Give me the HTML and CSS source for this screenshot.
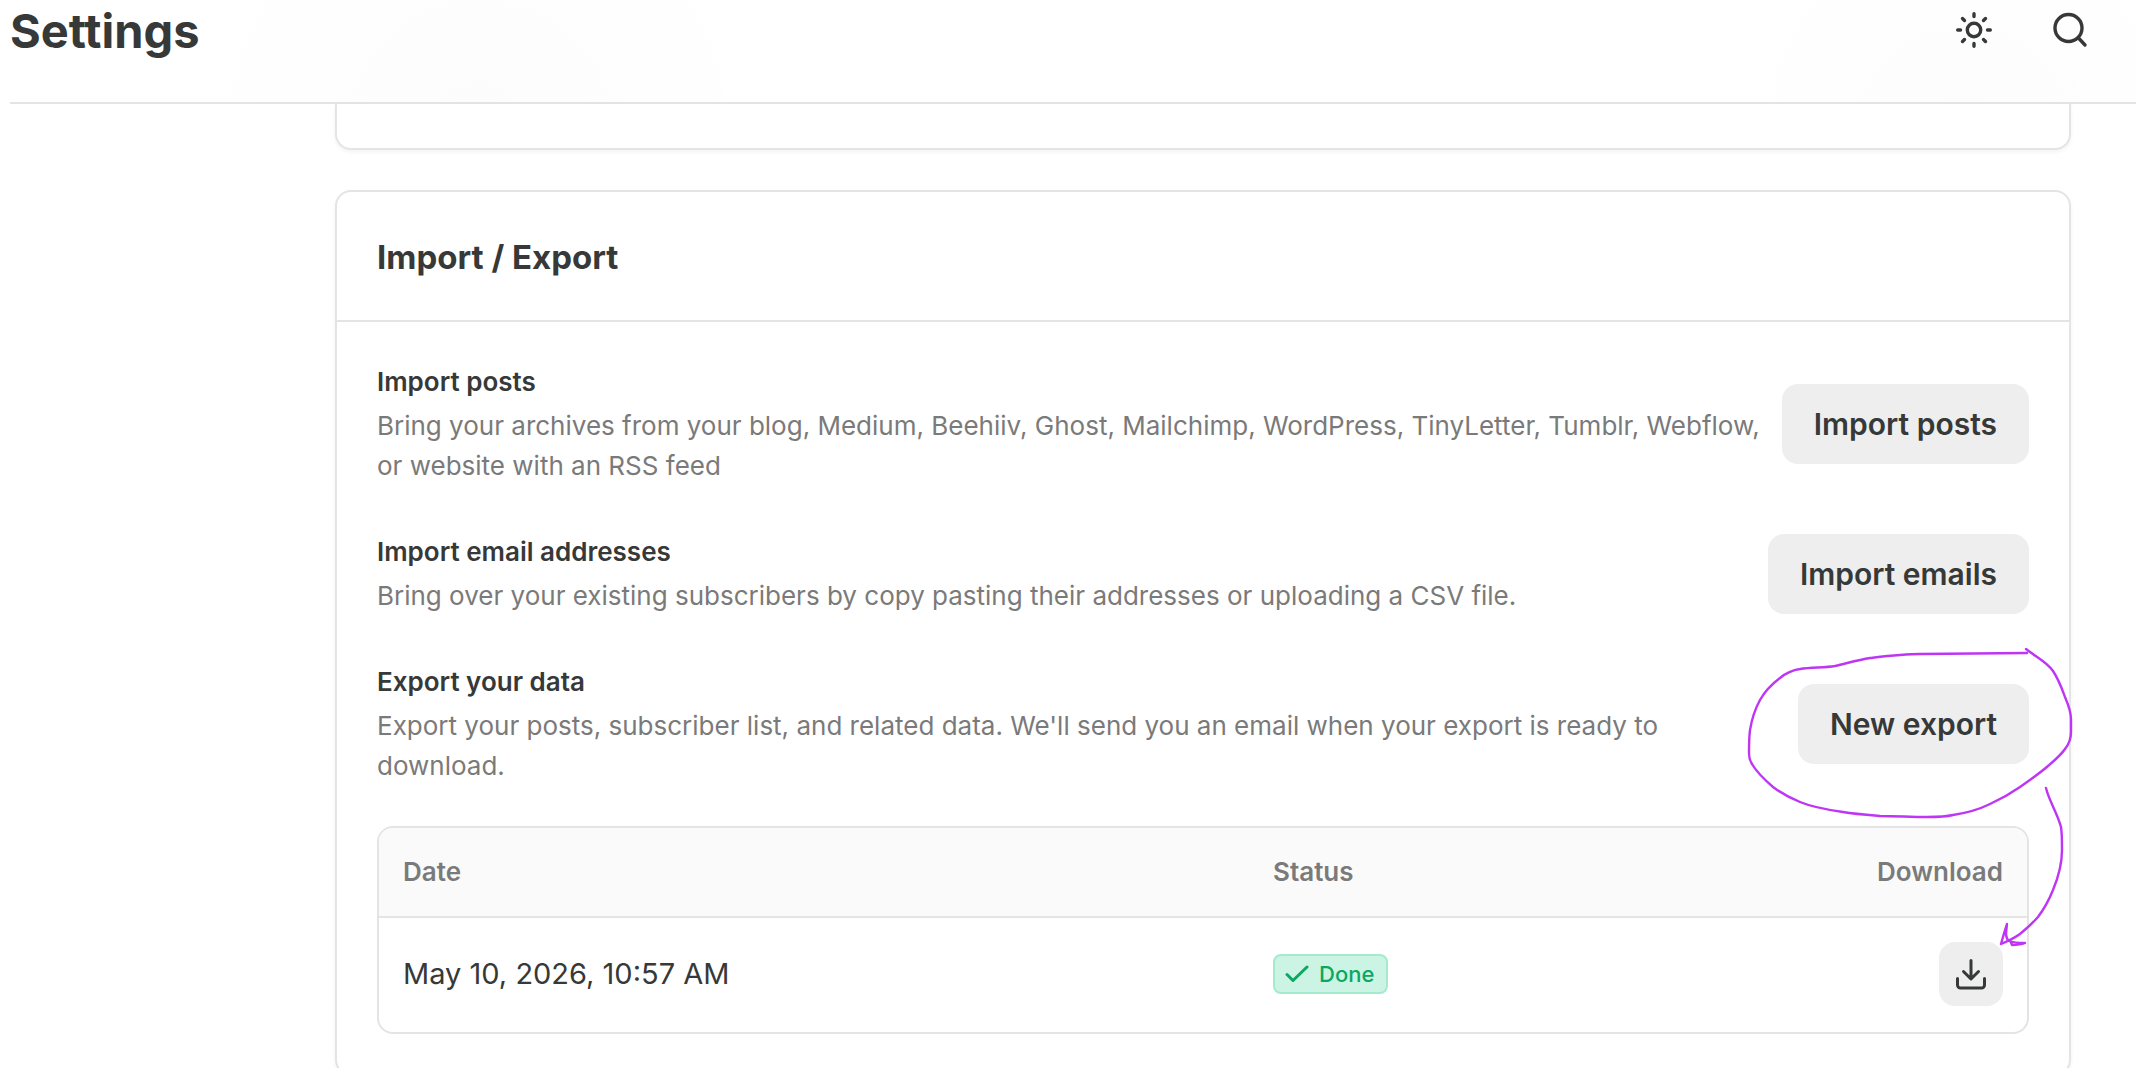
FILE: index.html
```html
<!DOCTYPE html>
<html lang="en">
<head>
<meta charset="utf-8">
<meta name="viewport" content="width=device-width, initial-scale=1">
<title>Settings</title>
<link rel="stylesheet" href="styles.css">
</head>
<body>
<div class="page">
  <header class="topbar">
    <h1 class="topbar-title">Settings</h1>
    <div class="topbar-actions">
      <button class="icon-button" type="button" aria-label="Toggle theme">
        <svg class="icon" viewBox="0 0 40 40" aria-hidden="true">
          <circle cx="20" cy="20" r="6.7"/>
          <path d="M20 3.7v2.8M20 33.5v2.8M3.7 20h2.800M33.5 20h2.8M8.5 8.5l2 2M29.5 29.5l2 2M8.5 31.5l2-2M29.5 10.5l2-2"/>
        </svg>
      </button>
      <button class="icon-button" type="button" aria-label="Search">
        <svg class="icon" viewBox="0 0 40 40" aria-hidden="true">
          <circle cx="18.5" cy="18" r="13.5"/>
          <path d="M28.5 28l6.5 7"/>
        </svg>
      </button>
    </div>
  </header>

  <main class="content">
    <section class="card card-previous" aria-hidden="true"></section>

    <section class="card">
      <div class="card-header"><h2 class="card-title">Import / Export</h2></div>
      <div class="card-body">
        <div class="setting">
          <div class="setting-text">
            <h3 class="setting-title">Import posts</h3>
            <p class="setting-note">Bring your archives from your blog, Medium, Beehiiv, Ghost, Mailchimp, WordPress, TinyLetter, Tumblr, Webflow, or website with an RSS feed</p>
          </div>
          <button class="button" type="button">Import posts</button>
        </div>

        <div class="setting">
          <div class="setting-text">
            <h3 class="setting-title">Import email addresses</h3>
            <p class="setting-note">Bring over your existing subscribers by copy pasting their addresses or uploading a CSV file.</p>
          </div>
          <button class="button" type="button">Import emails</button>
        </div>

        <div class="export">
          <div class="setting">
            <div class="setting-text">
              <h3 class="setting-title">Export your data</h3>
              <p class="setting-note">Export your posts, subscriber list, and related data. We'll send you an email when your export is ready to download.</p>
            </div>
            <button class="button" type="button">New export</button>
          </div>

          <div class="table-frame">
            <table class="table">
              <thead>
                <tr>
                  <th class="col-date" scope="col">Date</th>
                  <th class="col-status" scope="col">Status</th>
                  <th class="col-download" scope="col">Download</th>
                </tr>
              </thead>
              <tbody>
                <tr>
                  <td>May 10, 2026, 10:57 AM</td>
                  <td>
                    <span class="badge">
                      <svg class="badge-icon" viewBox="0 0 24 24" aria-hidden="true"><path d="M2 12.5l6 6L22 5"/></svg>
                      Done
                    </span>
                  </td>
                  <td class="col-download">
                    <button class="download" type="button" aria-label="Download export">
                      <svg class="download-icon" viewBox="0 0 32 32" aria-hidden="true"><path d="M16 2.5v18M8.5 13.5l7.5 7.5 7.5-7.500M2.500 20.5v6.500a3 3 0 0 0 3 3h21a3 3 0 0 0 3-3v-6.500"/></svg>
                    </button>
                  </td>
                </tr>
              </tbody>
            </table>
          </div>

          <svg class="annotation" viewBox="1740 640 340 320" aria-hidden="true">
            <path d="M2026 649C2036 657 2047 662 2053 671C2059 680 2062 689 2065 697C2068 704 2071 711 2071 719V732C2071 738 2069 744 2065 749C2061 755 2055 760 2048 766C2040 773 2030 780 2020 787C2010 794 2001 799 1990 804C1978 810 1966 813 1953 815C1945 817 1936 817 1927 817C1911 817 1896 816 1880 816C1868 815 1855 814 1843 812C1829 810 1812 807 1800 802C1790 798 1781 793 1773 787C1765 780 1757 773 1752 764C1750 761 1749 758 1749 753C1749 745 1749 738 1750 730C1752 718 1755 709 1760 700C1765 691 1772 684 1780 678C1786 673 1793 670 1800 669C1812 667 1824 668 1835 666C1848 663 1858 660 1870 658C1887 656 1903 654 1920 654L2027 653"/>
            <path d="M2046 788C2049 801 2057 812 2061 827Q2062 833 2062 850C2062 863 2058 878 2053 890C2049 900 2044 909 2038 917Q2030 926 2020 934Q2013 939 2001 944Q2004 933 2007 924C2006 932 2005 938 2009 941Q2014 943 2025 943Q2020 945 2012 945L2010 940"/>
          </svg>
        </div>
      </div>
    </section>
  </main>
</div>
</body>
</html>
```
FILE: styles.css
```css
* { box-sizing: border-box; }

body {
  margin: 0;
  background: #fff;
  color: #373938;
  font-family: Inter, "Liberation Sans", sans-serif;
  font-size: 29px;
  line-height: 40px;
}

h1, h2, h3, p { margin: 0; }

button {
  border: 0;
  padding: 0;
  color: inherit;
  font: inherit;
}

svg {
  display: block;
  fill: none;
  stroke: currentColor;
  stroke-linecap: round;
  stroke-linejoin: round;
}

.page {
  height: 100vh;
  overflow: hidden;
}

.topbar {
  display: flex;
  align-items: flex-start;
  justify-content: space-between;
  height: 104px;
  margin-left: 10px;
  padding-right: 46px;
  border-bottom: 2px solid #e4e4e4;
  background:
    radial-gradient(circle at 22% 130%, rgba(0, 0, 0, 0.012), transparent 300px),
    radial-gradient(circle at 92% 130%, rgba(0, 0, 0, 0.012), transparent 240px);
}

.topbar-title {
  font-size: 47px;
  font-weight: 700;
  line-height: 62px;
}

.topbar-actions {
  display: flex;
  gap: 56px;
  padding-top: 10px;
}

.icon-button { background: none; }

.icon {
  width: 40px;
  height: 40px;
  stroke-width: 3.4px;
}

.content {
  display: grid;
  gap: 40px;
  padding: 0 65px 40px 335px;
}

.card {
  border: 2px solid #e4e4e4;
  border-radius: 16px;
  background: #fff;
  box-shadow: 0 2px 4px rgba(0, 0, 0, 0.05);
}

.card-previous {
  height: 46px;
  border-top: 0;
  border-radius: 0 0 16px 16px;
}

.card-header {
  padding: 41px 40px 39px;
  border-bottom: 2px solid #e4e4e4;
}

.card-title {
  font-size: 33px;
  font-weight: 700;
  line-height: 48px;
}

.card-body {
  display: grid;
  gap: 46px;
  padding: 40px;
}

.setting {
  display: flex;
  align-items: center;
  justify-content: space-between;
  gap: 20px;
}

.setting-text {
  display: grid;
  gap: 4px;
}

.setting-title {
  font-size: 26px;
  font-weight: 600;
}

.setting-note {
  color: #7a7a7a;
  font-size: 26px;
}

.button {
  flex: none;
  padding: 20px 32px;
  border-radius: 16px;
  background: #eee;
  font-size: 30px;
  font-weight: 600;
}

.export {
  position: relative;
  display: grid;
  gap: 40px;
}

.table-frame {
  overflow: hidden;
  border: 2px solid #e4e4e4;
  border-radius: 16px;
}

.table {
  width: 100%;
  border-spacing: 0;
  table-layout: fixed;
  text-align: left;
}

.table th {
  padding: 24px;
  border-bottom: 2px solid #e4e4e4;
  background: #fafafa;
  color: #7a7a7a;
  font-size: 26px;
  font-weight: 600;
}

.table td { padding: 24px 24px 26px; }

.col-date { width: 870px; }

.table .col-download { text-align: right; }

.badge {
  display: flex;
  align-items: center;
  gap: 10px;
  width: max-content;
  height: 40px;
  padding: 0 12px 0 10px;
  border: 2px solid #a3ebcc;
  border-radius: 8px;
  background: #ccf4e4;
  color: #0aa860;
  font-size: 22px;
  font-weight: 500;
}

.badge-icon {
  width: 24px;
  height: 24px;
  stroke-width: 3px;
}

.download {
  display: inline-grid;
  place-items: center;
  width: 64px;
  height: 64px;
  border-radius: 16px;
  background: #eee;
  vertical-align: top;
}

.download-icon {
  width: 32px;
  height: 32px;
  stroke-width: 3px;
}

.annotation {
  position: absolute;
  top: -22px;
  right: -51px;
  width: 340px;
  height: 320px;
  stroke: #bf35f5;
  stroke-width: 2.4px;
  pointer-events: none;
}
```
